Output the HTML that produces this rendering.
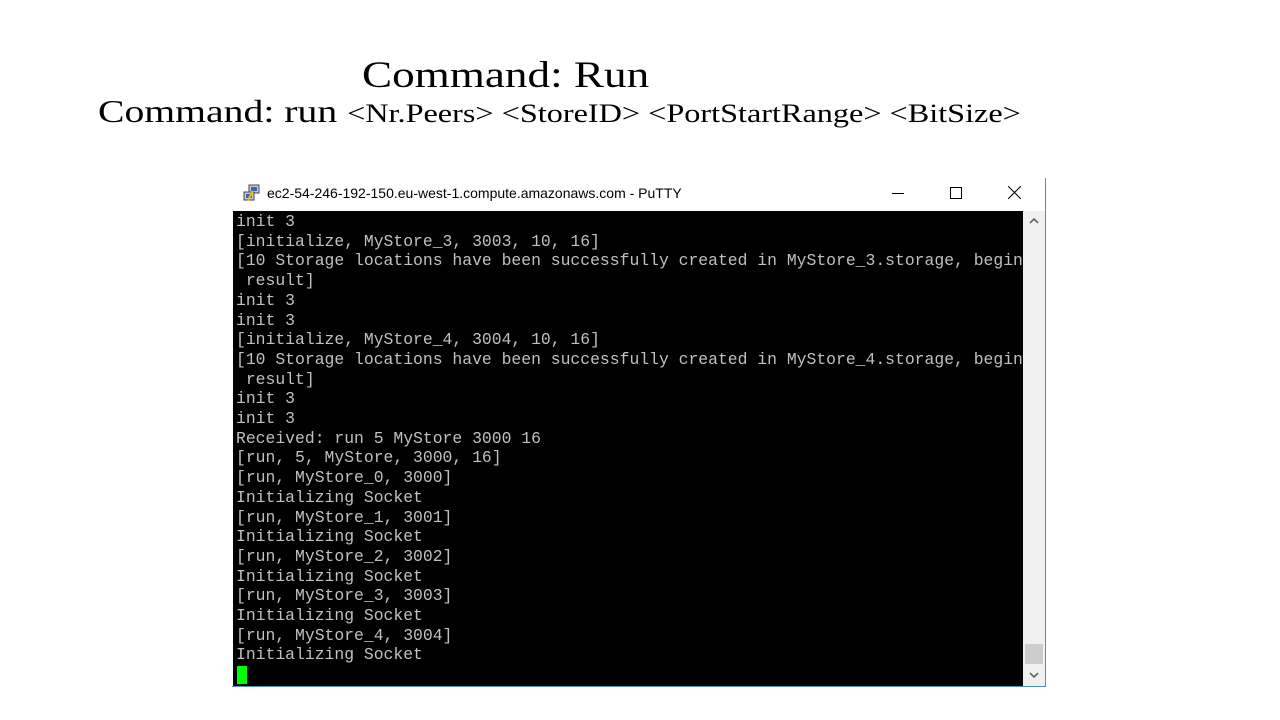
<!DOCTYPE html>
<html><head><style>
body{margin:0;width:1280px;height:720px;background:#fff;position:relative;overflow:hidden;font-family:"Liberation Serif",serif}
.t1{position:absolute;left:362px;top:54px;font-size:37px;color:#000;white-space:nowrap;transform:scaleX(1.22);transform-origin:left}
.t2{position:absolute;left:98px;top:93px;font-size:32px;color:#000;white-space:nowrap;transform:scaleX(1.24);transform-origin:left}
.t2 span{font-size:26px}
.win{position:absolute;left:232px;top:178px;width:813px;height:508px;background:#fff;border-right:1px solid #4a90b8;border-bottom:1px solid #4a90b8}
.title{position:absolute;left:35px;top:7px;font-family:"Liberation Sans",sans-serif;font-size:14px;color:#000}
.term{position:absolute;left:1px;top:33px;width:790px;height:475px;background:#000}
pre{margin:0;position:absolute;left:3px;top:1px;font-family:"Liberation Mono",monospace;font-size:16.4px;line-height:19.7px;color:#c0c0c0}
.sb{position:absolute;left:791px;top:33px;width:22px;height:475px;background:#f0f0f0}
.cur{position:absolute;left:4px;top:455px;width:10px;height:18px;background:#00ff00}
</style></head><body>
<div class="t1">Command: Run</div>
<div class="t2">Command: run <span>&lt;Nr.Peers&gt; &lt;StoreID&gt; &lt;PortStartRange&gt; &lt;BitSize&gt;</span></div>
<div class="win">
<svg style="position:absolute;left:10px;top:6px" width="20" height="20" viewBox="0 0 20 20"><rect x="7" y="1" width="10" height="8" fill="#ccc" stroke="#444"/><rect x="9" y="3" width="6" height="4" fill="#3a5fcd"/><rect x="2" y="8" width="10" height="8" fill="#ccc" stroke="#444"/><rect x="4" y="10" width="6" height="4" fill="#3a5fcd"/><path d="M6 16l5-9" stroke="#e8c000" stroke-width="2"/></svg>
<div class="title">ec2-54-246-192-150.eu-west-1.compute.amazonaws.com - PuTTY</div>
<div style="position:absolute;left:660px;top:15px;width:12px;height:1px;background:#000"></div>
<div style="position:absolute;left:718px;top:9px;width:10px;height:10px;border:1px solid #000"></div>
<svg style="position:absolute;left:776px;top:8px" width="13" height="13"><path d="M0 0L13 13M13 0L0 13" stroke="#000"/></svg>
<div class="term"><pre>init 3
[initialize, MyStore_3, 3003, 10, 16]
[10 Storage locations have been successfully created in MyStore_3.storage, begin
 result]
init 3
init 3
[initialize, MyStore_4, 3004, 10, 16]
[10 Storage locations have been successfully created in MyStore_4.storage, begin
 result]
init 3
init 3
Received: run 5 MyStore 3000 16
[run, 5, MyStore, 3000, 16]
[run, MyStore_0, 3000]
Initializing Socket
[run, MyStore_1, 3001]
Initializing Socket
[run, MyStore_2, 3002]
Initializing Socket
[run, MyStore_3, 3003]
Initializing Socket
[run, MyStore_4, 3004]
Initializing Socket</pre><div class="cur"></div></div>
<div class="sb">
<svg style="position:absolute;left:6px;top:7px" width="10" height="6"><path d="M1 5L5 1L9 5" stroke="#555" fill="none" stroke-width="1.5"/></svg>
<div style="position:absolute;left:2px;top:433px;width:18px;height:20px;background:#cdcdcd"></div>
<svg style="position:absolute;left:6px;top:461px" width="10" height="6"><path d="M1 1L5 5L9 1" stroke="#555" fill="none" stroke-width="1.5"/></svg>
</div>
</div>
</body></html>
